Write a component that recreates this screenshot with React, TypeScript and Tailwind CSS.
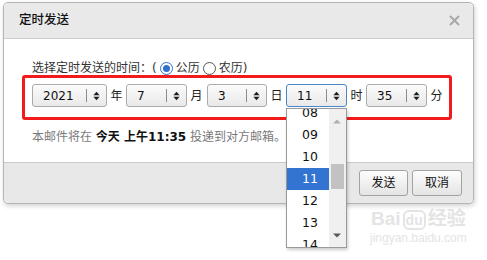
import React from "react";

const FONT = { fontFamily: '"DejaVu Sans", "Noto Sans CJK SC", sans-serif' };

function Arrows() {
  return (
    <svg width="7" height="10" viewBox="0 0 7 10">
      <path d="M3.5 0.8 L6.6 4.2 H0.4 Z M0.4 5.8 H6.6 L3.5 9.2 Z" fill="#1e1e1e" />
    </svg>
  );
}

function Sel({ wClass, value, focused }: { wClass: string; value: string; focused?: boolean }) {
  return (
    <div
      className={
        "flex h-[23px] items-center rounded-[3px] border bg-gradient-to-b from-[#fbfbfb] to-[#e9e9e9] " +
        wClass +
        (focused ? " border-[#4a86c8]" : " border-[#ababab]")
      }
    >
      <div className="flex-1 pl-[10px] text-[12px] leading-[14px] text-[#111]">{value}</div>
      <div className="h-[13px] w-px bg-[#8c8c8c]" />
      <div className="flex w-[19px] items-center justify-center">
        <Arrows />
      </div>
    </div>
  );
}

function Label({ t }: { t: string }) {
  return <div className="w-[19px] text-center text-[12px] leading-[14px] text-[#222]">{t}</div>;
}

function Radio({ checked }: { checked?: boolean }) {
  return (
    <span
      className={
        "mx-[3px] inline-flex h-[13px] w-[13px] items-center justify-center rounded-full border bg-white align-middle " +
        (checked ? "border-[#2f6fd0]" : "border-[#555]")
      }
    >
      {checked && <span className="h-[7px] w-[7px] rounded-full bg-[#2f6fd0]" />}
    </span>
  );
}

export default function App() {
  const items = ["08", "09", "10", "11", "12", "13", "14"];
  return (
    <div className="relative h-[260px] w-[487px] overflow-hidden bg-white" style={FONT}>
      <div className="ml-[3px] mt-[2px] w-[471px] rounded-[5px] border border-[#b4b4b4] bg-white shadow-[1px_2px_5px_rgba(0,0,0,0.18)]">
        {/* header */}
        <div className="flex h-[36px] items-center justify-between rounded-t-[5px] border-b border-[#cdcdcd] bg-[#e9e9e9] pl-[15px] pr-[13px]">
          <div className="text-[12.5px] font-medium text-[#111]">定时发送</div>
          <svg width="11" height="11" viewBox="0 0 11 11">
            <path d="M1 1 L10 10 M10 1 L1 10" stroke="#a8a8a8" strokeWidth="2" />
          </svg>
        </div>
        {/* body */}
        <div className="h-[123px] pt-[23px]">
          <div className="flex h-[13px] items-center pl-[28px] text-[12px] leading-[13px] text-[#333]">
            <span>选择定时发送的时间：(</span>
            <Radio checked />
            <span>公历</span>
            <Radio />
            <span>农历)</span>
          </div>
          <div className="ml-[18px] mt-0 h-[45px] w-[430px] rounded-[3px] border-[3px] border-[#f21a1a] pl-[7px] pt-[6px]">
            <div className="flex items-center">
              <Sel wClass="w-[75px]" value="2021" />
              <Label t="年" />
              <Sel wClass="w-[61px]" value="7" />
              <Label t="月" />
              <div className="ml-px">
                <Sel wClass="w-[60px]" value="3" />
              </div>
              <Label t="日" />
              <div className="relative">
                <Sel wClass="w-[61px]" value="11" focused />
                <div className="absolute left-0 top-[24px] z-10 flex h-[140px] w-[61px] overflow-hidden border border-[#9a9a9a] bg-white shadow-[1px_2px_3px_rgba(0,0,0,0.2)]">
                  <div className="flex-1 overflow-hidden">
                    <div className="-mt-[7px]">
                      {items.map((it) => (
                        <div
                          key={it}
                          className={
                            "h-[22px] pl-[15px] text-[12.5px] leading-[22px] " +
                            (it === "11" ? "bg-[#3374d3] text-white" : "text-[#111]")
                          }
                        >
                          {it}
                        </div>
                      ))}
                    </div>
                  </div>
                  <div className="relative w-[17px] bg-[#f0f0f0]">
                    <svg className="absolute left-[4px] top-[10px]" width="8" height="5" viewBox="0 0 8 5">
                      <path d="M0 4.5 L4 0.5 L8 4.5 Z" fill="#b0b0b0" />
                    </svg>
                    <div className="absolute left-[2px] top-[55px] h-[25px] w-[13px] bg-[#c2c2c2]" />
                    <svg className="absolute left-[4px] top-[124px]" width="8" height="5" viewBox="0 0 8 5">
                      <path d="M0 0.5 H8 L4 4.5 Z" fill="#5a5a5a" />
                    </svg>
                  </div>
                </div>
              </div>
              <Label t="时" />
              <Sel wClass="w-[61px]" value="35" />
              <Label t="分" />
            </div>
          </div>
          <div className="mt-[10px] pl-[28px] text-[12px] leading-[14px] text-[#7a7a7a]">
            本邮件将在 <b className="text-[#111]">今天 上午11:35</b> 投递到对方邮箱。
          </div>
        </div>
        {/* footer */}
        <div className="flex h-[41px] items-center justify-end gap-[4px] rounded-b-[5px] border-t border-[#c9c9c9] bg-[#e8e8e8] pr-[11px]">
          <button className="h-[26px] w-[49px] rounded-[3px] border border-[#a3a3a3] bg-gradient-to-b from-[#fdfdfd] to-[#e4e4e4] text-[12px] text-[#111]">
            发送
          </button>
          <button className="h-[26px] w-[50px] rounded-[3px] border border-[#a3a3a3] bg-gradient-to-b from-[#fdfdfd] to-[#e4e4e4] text-[12px] text-[#111]">
            取消
          </button>
        </div>
      </div>
      {/* watermark */}
      <div className="pointer-events-none absolute left-[370px] top-[208px] flex flex-col items-center text-[#e4e4e4]">
        <div className="text-[19px] font-bold leading-[22px]" style={{ fontFamily: '"Liberation Sans", "Noto Sans CJK SC", sans-serif' }}>
          Bai<span className="mx-[2px] rounded-[6px] border-2 border-[#e4e4e4] px-[1px] text-[14px]">du</span>经验
        </div>
        <div className="text-[12px] leading-[14px]" style={{ fontFamily: '"Liberation Sans", sans-serif' }}>
          jingyan.baidu.com
        </div>
      </div>
    </div>
  );
}
